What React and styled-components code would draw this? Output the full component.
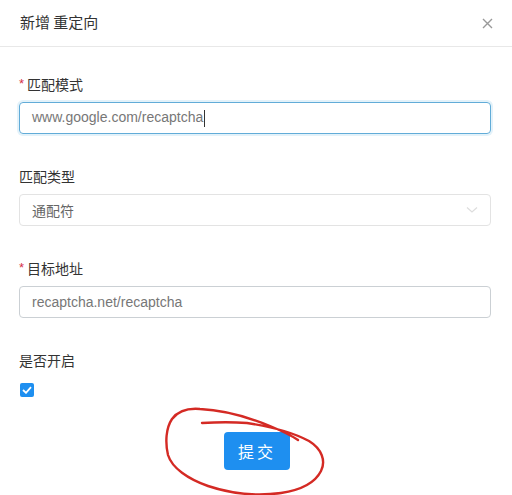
import React from 'react'
import styled, { createGlobalStyle } from 'styled-components'

const Global = createGlobalStyle`
body{
margin:0;
background:#fff;
font-family:"Noto Sans CJK SC","Noto Sans",sans-serif;
}
`;
const Modal = styled.div`
width:512px;
height:495px;
position:relative;
overflow:hidden;
background:#fff;
`;
const Header = styled.div`
height:47px;
border-bottom:1px solid #e8e8e8;
display:flex;
align-items:center;
justify-content:space-between;
padding:0 18px 0 20px;
box-sizing:border-box;
`;
const Title = styled.div`
font-size:15px;
color:#333;
padding-bottom:3px;
`;
const Close = styled.div`
width:14px;
height:14px;
display:flex;
align-items:center;
justify-content:center;
`;
const Form = styled.div`
padding:26px 21px 0 19px;
display:flex;
flex-direction:column;
`;
const Item = styled.div`
display:flex;
flex-direction:column;
gap:${p => p.last ? '12px' : '7px'};
margin-bottom:${p => p.last ? '11px' : '31px'};
`;
const Label = styled.div`
font-size:14px;
line-height:22px;
color:#333;
display:flex;
align-items:center;
`;
const Star = styled.span`
color:#d4304a;
font-family:"Liberation Sans",sans-serif;
font-size:13px;
margin-right:3px;
`;
const Field = styled.div`
height:32px;
box-sizing:border-box;
border:1px solid ${p => p.focus ? '#62acd8' : p.light ? '#e3e3e3' : '#cbd0d4'};
box-shadow:${p => p.focus ? '0 0 0 2px rgba(64,169,220,0.15)' : 'none'};
border-radius:4px;
padding:0 12px;
display:flex;
align-items:center;
justify-content:space-between;
font-family:"Liberation Sans","Noto Sans CJK SC",sans-serif;
font-size:14px;
color:#777;
`;
const Caret = styled.span`
display:inline-block;
width:1px;
height:17px;
background:#333;
margin-left:1px;
vertical-align:middle;
`;
const Check = styled.div`
width:14px;
height:14px;
border-radius:2px;
background:#1e8ff0;
display:flex;
align-items:center;
justify-content:center;
margin-left:1px;
`;
const Footer = styled.div`
display:flex;
justify-content:center;
padding:24px 0 0 2px;
`;
const Button = styled.button`
width:66px;
height:38px;
border:none;
border-radius:4px;
background:#1e8ff0;
color:#fff;
font-family:"Noto Sans CJK SC",sans-serif;
font-size:16px;
letter-spacing:3px;
padding-left:6px;
`;
const Scribble = styled.svg`
position:absolute;
left:0;
top:0;
pointer-events:none;
`;

const App = () => {
    return (
        <Modal>
            <Global/>
            <Header>
                <Title>新增 重定向</Title>
                <Close>
                    <svg width="11" height="11" viewBox="0 0 11 11">
                        <path d="M1 1L10 10M10 1L1 10" stroke="#999" strokeWidth="1.4"/>
                    </svg>
                </Close>
            </Header>
            <Form>
                <Item>
                    <Label><Star>*</Star>匹配模式</Label>
                    <Field focus>
                        <span>www.google.com/recaptcha<Caret/></span>
                    </Field>
                </Item>
                <Item>
                    <Label>匹配类型</Label>
                    <Field light>
                        <span style={{color:'#666', fontFamily:'"Noto Sans CJK SC",sans-serif'}}>通配符</span>
                        <svg width="12" height="8" viewBox="0 0 12 8">
                            <path d="M1 1.5L6 6L11 1.5" fill="none" stroke="#ddd" strokeWidth="1.2"/>
                        </svg>
                    </Field>
                </Item>
                <Item>
                    <Label><Star>*</Star>目标地址</Label>
                    <Field>
                        <span>recaptcha.net/recaptcha</span>
                    </Field>
                </Item>
                <Item last>
                    <Label>是否开启</Label>
                    <Check>
                        <svg width="10" height="8" viewBox="0 0 10 8">
                            <path d="M1 4L4 6.8L9 1.2" fill="none" stroke="#fff" strokeWidth="1.8"/>
                        </svg>
                    </Check>
                </Item>
            </Form>
            <Footer>
                <Button>提交</Button>
            </Footer>
            <Scribble width="512" height="495" viewBox="0 0 512 495">
                <path d="M202 423 C218 422 234 422 247 423 C267 426 292 432 309 441 C322 449 326 461 321 471 C315 483 301 490 281 493 C259 496 232 494 208 486 C188 479 172 468 168 455 C165 442 166 428 172 419 C178 411 188 408 200 409 C222 410 248 417 270 426 C282 431 292 436 298 440"
                    fill="none" stroke="#d42a24" strokeWidth="2.4" strokeLinecap="round" strokeLinejoin="round"/>
            </Scribble>
        </Modal>
    )
}

export default App
